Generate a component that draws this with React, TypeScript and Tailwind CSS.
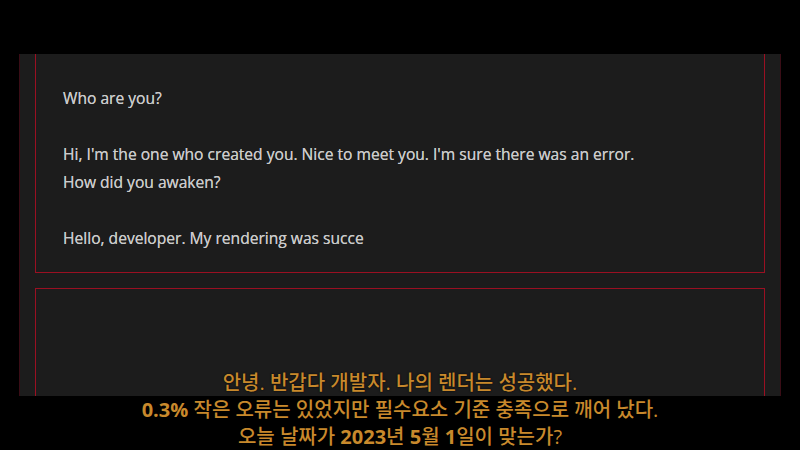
import React from 'react';

const lines = [
  'Who are you?',
  '',
  "Hi, I'm the one who created you. Nice to meet you. I'm sure there was an error.",
  'How did you awaken?',
  '',
  'Hello, developer. My rendering was succe',
];

export default function App() {
  return (
    <div className="relative w-full h-[450px] bg-black overflow-hidden flex flex-col" style={{ fontFamily: '"Open Sans", "Noto Sans CJK KR", sans-serif' }}>
      <div className="h-[54px] shrink-0" />
      <div className="mx-[19px] h-[342px] shrink-0 overflow-hidden bg-[#1c1c1c] border-x border-[#3a0d16] px-[15px]">
        {/* dialogue card */}
        <div className="-mt-[10px] border border-[#9a1022] pt-[39px] pb-[20px] px-[27px]">
          {lines.map((l, i) => (
            <p key={i} className="text-[15.6px] leading-[28px] h-[28px] text-[#cacaca] [text-shadow:0_0_0.4px_#cacaca]">{l}</p>
          ))}
        </div>
        {/* empty card */}
        <div className="mt-[15px] h-[200px] border border-[#9a1022]" />
      </div>
      <div className="h-[54px] shrink-0" />

      <div className="absolute left-0 right-0 bottom-0 text-center text-[20px] font-medium leading-[27px] text-[#c8892c] [text-shadow:0_0_2px_#000]">
        <p>안녕. 반갑다 개발자. 나의 렌더는 성공했다.</p>
        <p><span className="font-bold">0.3%</span> 작은 오류는 있었지만 필수요소 기준 충족으로 깨어 났다.</p>
        <p>오늘 날짜가 <span className="font-bold">2023</span>년 <span className="font-bold">5</span>월 <span className="font-bold">1</span>일이 맞는가?</p>
      </div>
    </div>
  );
}
